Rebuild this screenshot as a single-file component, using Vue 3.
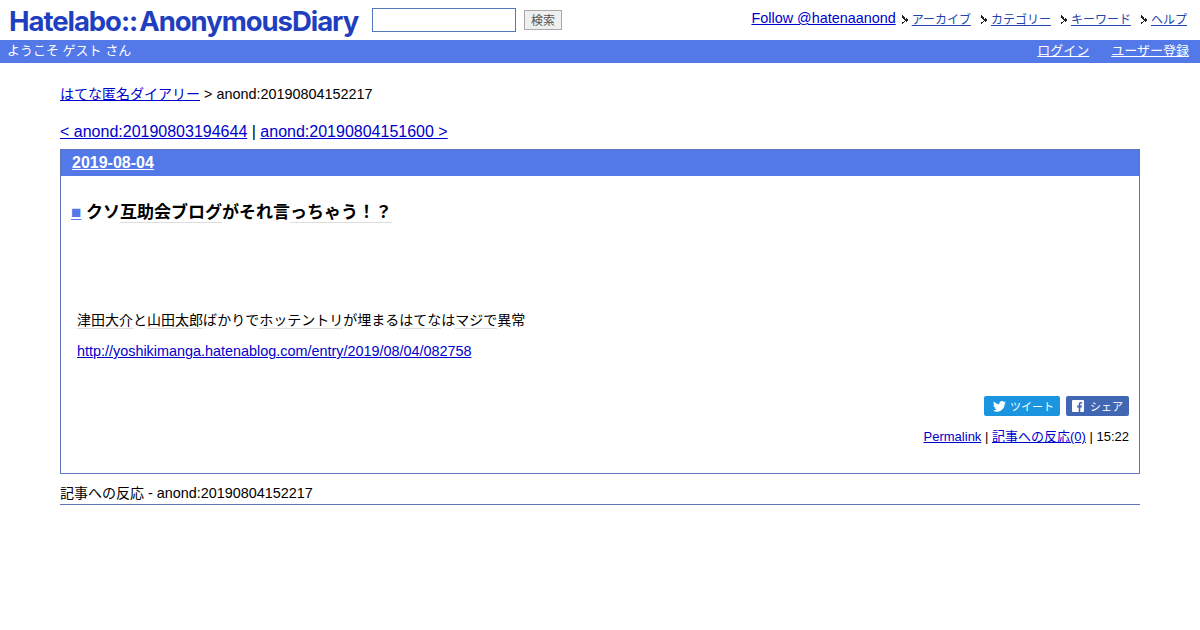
<template>
  <div class="page">
    <header class="top">
      <a class="logo">Hatelabo::<span class="logo-b">AnonymousDiary</span></a>
      <form class="search" @submit.prevent>
        <input class="search-box" type="text" />
        <button class="search-btn" type="button">検索</button>
      </form>
      <nav class="menu">
        <a class="follow" href="#">Follow @hatenaanond</a>
        <span v-for="item in menu" :key="item" class="menu-item">
          <svg class="arrow" width="7" height="11" viewBox="1 0 7 11"><path d="M1 0h1v1h1v1h1v1h-1v1h-1v-1h-1zM1 7h2v-1h1v1h-1v1h-1v1h-1zM3 3h1v1h1v-1h1v1h1v2h-1v1h-1v-1h-1v-1h-1z" fill="#222" /></svg>
          <a href="#">{{ item }}</a>
        </span>
      </nav>
    </header>
    <div class="welcome">
      <span>ようこそ ゲスト さん</span>
      <span class="account">
        <a href="#">ログイン</a>
        <a href="#">ユーザー登録</a>
      </span>
    </div>

    <main class="content">
      <p class="crumb"><a class="cjk" href="#">はてな匿名ダイアリー</a> &gt; anond:20190804152217</p>
      <p class="pager"><a href="#">&lt; anond:20190803194644</a> | <a href="#">anond:20190804151600 &gt;</a></p>

      <section class="day">
        <h2 class="date"><a href="#">2019-08-04</a></h2>
        <div class="body">
          <h3 class="title">
            <a class="mark" href="#">■</a>{{ ' ' }}<span>クソ<span class="kw">互助会ブログ</span>がそれ言<span class="kw">っちゃう！？</span></span>
          </h3>
          <p class="line"><span class="kw">津田大介</span>と<span class="kw">山田太郎</span>ばかりで<span class="kw">ホッテントリ</span>が埋まる<span class="kw">はてな</span>は<span class="kw">マジで</span>異常</p>
          <p class="line link"><a href="#">http://yoshikimanga.hatenablog.com/entry/2019/08/04/082758</a></p>
          <div class="share">
            <span class="btn tw">
              <svg width="13" height="11" viewBox="0 0 24 20"><path d="M24 2.4c-.9.4-1.8.7-2.8.8 1-.6 1.800-1.600 2.200-2.700-1 .6-2 1-3.100 1.200C19.300.7 18 0 16.600 0c-2.700 0-4.900 2.200-4.900 4.900 0 .4 0 .8.100 1.100C7.700 5.800 4.100 3.900 1.700.9c-.4.700-.7 1.600-.7 2.500 0 1.700.9 3.200 2.200 4.100-.8 0-1.600-.2-2.200-.6v.1c0 2.400 1.700 4.400 3.900 4.800-.4.100-.8.200-1.300.2-.3 0-.6 0-.9-.1.600 2 2.400 3.400 4.600 3.400-1.700 1.300-3.800 2.100-6.100 2.100-.4 0-.8 0-1.200-.1C2.200 18.700 4.800 19.500 7.500 19.500c9.100 0 14-7.500 14-14v-.6c1-.7 1.800-1.600 2.500-2.500z" fill="#fff" /></svg>
              ツイート
            </span>
            <span class="btn fb">
              <svg width="12" height="12" viewBox="0 0 12 12"><path d="M1 0h10a1 1 0 0 1 1 1v10a1 1 0 0 1-1 1H8.300V7.400h1.500l.2-1.800H8.300V4.500c0-.5.200-.9.900-.9h1V2c-.2 0-.7-.1-1.300-.1-1.300 0-2.200.8-2.200 2.300v1.400H5.200v1.800h1.500V12H1a1 1 0 0 1-1-1V1a1 1 0 0 1 1-1z" fill="#fff" /></svg>
              シェア
            </span>
          </div>
          <p class="foot"><a href="#">Permalink</a> | <a href="#">記事への反応(0)</a> | 15:22</p>
        </div>
      </section>

      <h3 class="refs"><span class="cjk">記事への反応</span> - anond:20190804152217</h3>
    </main>
  </div>
</template>

<script setup>
const menu = ['アーカイブ', 'カテゴリー', 'キーワード', 'ヘルプ']
</script>

<style>
body {
  background: #fff;
}
</style>

<style scoped>
.page {
  font-family: "Liberation Sans", "Noto Sans CJK JP", sans-serif;
  font-size: 14px;
  color: #000;
  height: 630px;
  overflow: hidden;
}
a {
  color: #0000cc;
}
p, h2, h3 {
  margin: 0;
}
.cjk {
  font-size: 14px;
}
.top {
  display: flex;
  align-items: flex-start;
  height: 40px;
  padding-left: 9px;
}
.logo {
  width: 350px;
  margin-top: 4px;
  font-family: "Inter", sans-serif;
  font-size: 27.5px;
  font-weight: 700;
  letter-spacing: -1.05px;
  line-height: 34px;
  color: #1f3fc0;
  white-space: nowrap;
}
.logo-b {
  margin-left: 2px;
}
.search {
  display: flex;
  align-items: center;
  gap: 8px;
  margin: 8px 0 0 13px;
}
.search-box {
  box-sizing: border-box;
  width: 144px;
  height: 24px;
  margin: 0;
  border: 1px solid #5577bb;
  background: #fff;
}
.search-btn {
  box-sizing: border-box;
  width: 38px;
  height: 20px;
  padding: 0 0 2px;
  border: 1px solid #aaa;
  background: #efefef;
  color: #555;
  font: 12px "Liberation Sans", "Noto Sans CJK JP", sans-serif;
}
.menu {
  display: flex;
  margin-left: auto;
  margin-right: 13px;
  padding-top: 10px;
  font-size: 12px;
  line-height: 18px;
}
.menu a {
  color: #2244aa;
}
.menu .follow {
  color: #0000cc;
  font-size: 14.4px;
  line-height: 16px;
}
.menu-item {
  display: flex;
  align-items: center;
  height: 20px;
  margin-left: 10px;
  gap: 3px;
}
.follow + .menu-item {
  margin-left: 6px;
}
.welcome {
  display: flex;
  justify-content: space-between;
  height: 23px;
  padding: 0 11px 0 7px;
  background: #5279e7;
  color: #fff;
  font-size: 13px;
  line-height: 22px;
}
.account {
  display: flex;
  gap: 22px;
}
.account a {
  color: #fff;
}
.content {
  margin: 0 60px;
  padding-top: 23px;
}
.crumb {
  font-size: 14.4px;
  line-height: 17px;
}
.pager {
  margin-top: 19px;
  font-size: 16px;
  line-height: 19px;
}
.day {
  box-sizing: border-box;
  height: 325px;
  margin-top: 8px;
  border: 1px solid #5f77b8;
}
.date {
  height: 26px;
  padding-left: 11px;
  background: #5279e7;
  font-size: 16px;
  line-height: 26px;
}
.date a {
  color: #fff;
}
.body {
  padding: 0 10px 0 10px;
}
.title {
  margin-top: 27px;
  font-size: 17px;
  line-height: 20px;
  font-weight: 700;
}
.mark {
  color: #5279e7;
}
.kw {
  border-bottom: 1px solid #ddd;
}
.line {
  margin: 0 0 0 6px;
  line-height: 20px;
}
.title + .line {
  margin-top: 87px;
}
.link {
  margin-top: 11px;
  font-size: 14.4px;
}
.share {
  display: flex;
  justify-content: flex-end;
  gap: 6px;
  margin-top: 35px;
}
.btn {
  display: flex;
  align-items: center;
  justify-content: center;
  gap: 4px;
  height: 20px;
  border-radius: 2px;
  color: #fff;
  font-size: 11px;
}
.tw {
  box-sizing: border-box;
  width: 76px;
  padding-right: 6px;
  justify-content: flex-end;
  background: #1b95e0;
}
.fb {
  width: 63px;
  background: #4267b2;
  gap: 6px;
}
.foot {
  margin-top: 12px;
  text-align: right;
  font-size: 13px;
  line-height: 17px;
}
.refs {
  margin-top: 10px;
  padding-bottom: 1px;
  border-bottom: 1px solid #5f77b8;
  font-size: 14.4px;
  font-weight: 400;
  line-height: 19px;
}
</style>
